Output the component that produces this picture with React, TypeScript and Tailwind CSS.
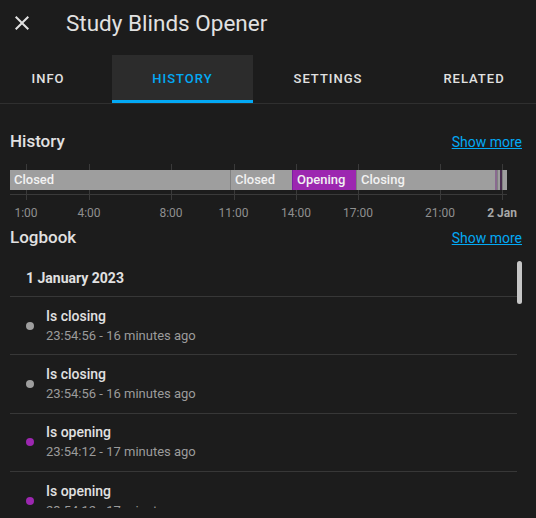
import React from 'react';

const ticks = [
  { x: 16, label: '1:00' },
  { x: 79, label: '4:00' },
  { x: 161, label: '8:00' },
  { x: 223.5, label: '11:00' },
  { x: 286, label: '14:00' },
  { x: 348, label: '17:00' },
  { x: 430, label: '21:00' },
  { x: 492, label: '2 Jan', bold: true },
];

const segmentColors: Record<string, string> = {
  gray: 'bg-[#9e9e9e] border-[#808080]',
  purple: 'bg-[#9c27b0] border-[#7b1fa2]',
  thin: 'bg-[#8a6a90] border-[#8a6a90]',
  dark: 'bg-[#4a2f50] border-[#4a2f50]',
};

const segments = [
  { w: 220, label: 'Closed', color: 'gray', first: true },
  { w: 62, label: 'Closed', color: 'gray' },
  { w: 64, label: 'Opening', color: 'purple' },
  { w: 139, label: 'Closing', color: 'gray' },
  { w: 1.5, label: '', color: 'thin' },
  { w: 3.5, label: '', color: 'gray' },
  { w: 1.5, label: '', color: 'dark' },
  { w: 5.5, label: '', color: 'gray' },
];

const entries = [
  { title: 'Is closing', when: '23:54:56 - 16 minutes ago', dot: 'bg-[#9e9e9e]' },
  { title: 'Is closing', when: '23:54:56 - 16 minutes ago', dot: 'bg-[#9e9e9e]' },
  { title: 'Is opening', when: '23:54:12 - 17 minutes ago', dot: 'bg-[#9c27b0]' },
  { title: 'Is opening', when: '23:54:12 - 17 minutes ago', dot: 'bg-[#9c27b0]' },
  { title: 'Is opening', when: '23:53:40 - 17 minutes ago', dot: 'bg-[#9c27b0]' },
];

function SectionHeader({ title }: { title: string }) {
  return (
    <div className="flex h-6 items-center justify-between pl-[10px] pr-[14px]">
      <h2 className="text-[17px] font-medium text-[#e1e1e1]">{title}</h2>
      <a href="#" className="text-[14px] leading-5 text-[#03a9f4] underline">
        Show more
      </a>
    </div>
  );
}

export default function App() {
  return (
    <div
      className="h-[518px] w-[536px] overflow-hidden bg-[#1c1c1c] text-[#e1e1e1]"
      style={{ fontFamily: 'Roboto, "Noto Sans", sans-serif' }}
    >
      {/* Header */}
      <div className="mb-[10px] flex h-[45px] items-center pl-[10px]">
        <button className="flex h-6 w-6 items-center justify-center text-[#e1e1e1]">
          <svg viewBox="0 0 24 24" className="h-6 w-6" fill="currentColor">
            <path d="M19,6.41L17.59,5L12,10.59L6.41,5L5,6.41L10.59,12L5,17.59L6.41,19L12,13.41L17.59,19L19,17.59L13.41,12L19,6.41Z" />
          </svg>
        </button>
        <h1 className="ml-[32px] text-[22.5px] leading-7 text-[#e1e1e1]">Study Blinds Opener</h1>
      </div>

      {/* Tabs */}
      <div className="flex h-[49px] overflow-hidden border-b border-[#2f2f2f] text-[13px] font-medium uppercase tracking-[1px]">
        <div className="flex w-[112px] items-center justify-center pr-4 text-[#e1e1e1]">Info</div>
        <div className="flex w-[141px] items-center justify-center border-b-[3px] border-[#03a9f4] bg-[#2c2c2c] pt-[3px] text-[#03a9f4]">
          History
        </div>
        <div className="flex w-[150px] items-center justify-center text-[#e1e1e1]">Settings</div>
        <div className="flex flex-1 items-center justify-center pl-[9px] text-[#e1e1e1]">Related</div>
      </div>

      {/* History */}
      <div className="pt-[26px]">
        <SectionHeader title="History" />
        <div className="relative ml-[10px] mt-[10px] h-[56px] w-[497px]">
          {ticks.map((t) => (
            <div
              key={t.label}
              className="absolute top-0 h-[36px] w-px bg-[#3a3a3a]"
              style={{ left: t.x }}
            />
          ))}
          <div className="absolute left-0 top-[30px] h-px w-full bg-[#3a3a3a]" />
          <div className="absolute left-0 top-[6px] flex h-[20px] w-full">
            {segments.map((s, i) => (
              <div
                key={i}
                className={`flex h-full shrink-0 items-center overflow-hidden whitespace-nowrap text-[13px] font-medium text-[#f2f2f2] ${
                  s.first ? '' : 'border-l'
                } ${segmentColors[s.color]}`}
                style={{ width: s.w, paddingLeft: s.w > 10 ? 4 : 0 }}
              >
                {s.label}
              </div>
            ))}
          </div>
          {ticks.map((t) => (
            <div
              key={t.label + '-label'}
              className={`absolute top-[41px] -translate-x-1/2 whitespace-nowrap text-[12px] leading-4 ${
                t.bold ? 'font-bold text-[#a8a8a8]' : 'text-[#8f8f8f]'
              }`}
              style={{ left: t.x }}
            >
              {t.label}
            </div>
          ))}
        </div>
      </div>

      {/* Logbook */}
      <div className="mt-[6px]">
        <SectionHeader title="Logbook" />
        <div className="relative ml-[10px] mt-[11px] h-[247px] w-[514px] overflow-hidden">
          <div className="w-[507px]">
            <div className="flex h-9 items-center border-b border-[#373737] pl-4 text-[14px] font-bold text-[#e1e1e1]">
              1 January 2023
            </div>
            {entries.map((e, i) => (
              <div key={i} className="flex h-[58.33px] items-center border-b border-[#373737] pl-4">
                <span className={`h-2 w-2 shrink-0 rounded-full ${e.dot}`} />
                <div className="ml-3">
                  <p className="text-[14px] font-medium leading-5 text-[#e1e1e1]">{e.title}</p>
                  <p className="text-[13px] leading-5 text-[#9b9b9b]">{e.when}</p>
                </div>
              </div>
            ))}
          </div>
          <div className="absolute left-[507px] top-0 h-[43px] w-[5px] rounded-full bg-[#c6c6c6]" />
        </div>
      </div>
    </div>
  );
}
